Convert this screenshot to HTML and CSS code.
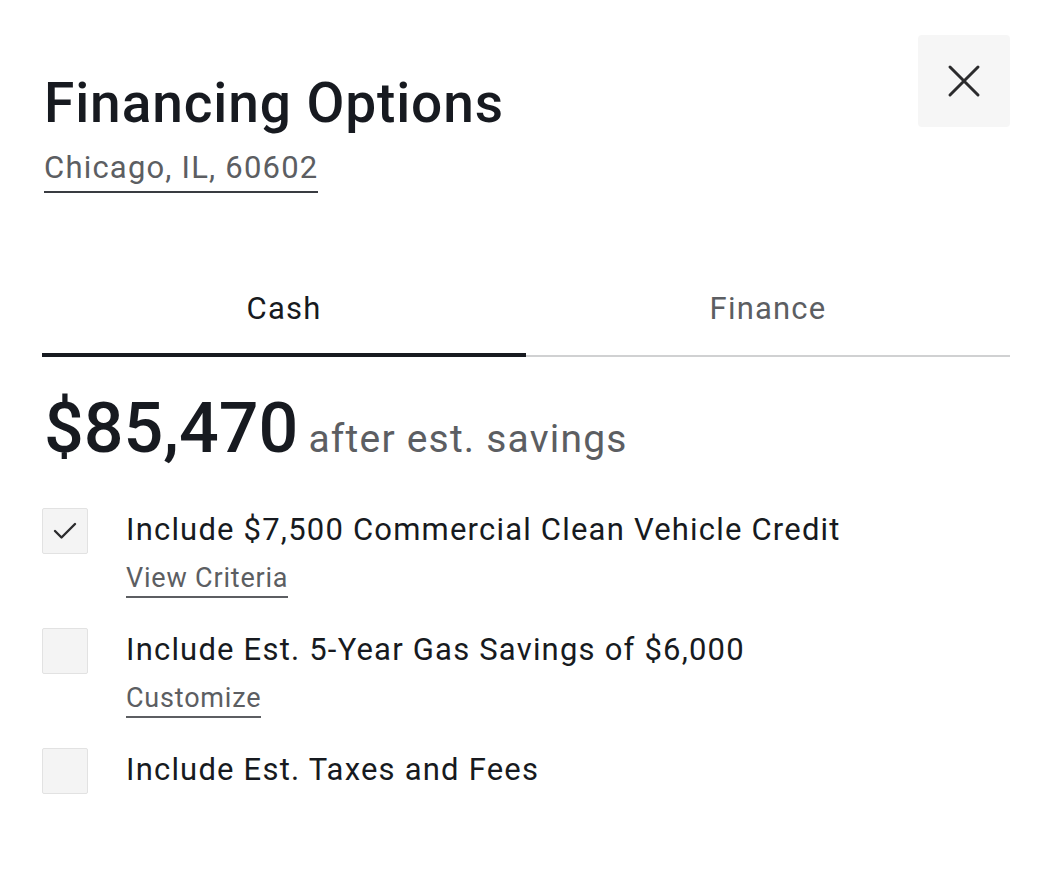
FILE: index.html
```html
<!DOCTYPE html>
<html lang="en">
<head>
  <meta charset="UTF-8" />
  <meta name="viewport" content="width=device-width, initial-scale=1.0"/>
  <title>Financing Options</title>
  <link rel="stylesheet" href="styles.css">
</head>
<body>

  <div class="panel">
    <header class="panel-head">
      <div class="title-block">
        <h1>Financing Options</h1>
        <a href="#" class="location">Chicago, IL, 60602</a>
      </div>
      <button class="close-btn" aria-label="Close">
        <svg width="34" height="34" viewBox="0 0 34 34" fill="none" stroke="#2b2b2d" stroke-width="3" stroke-linecap="round">
          <path d="M3 3 L31 31 M31 3 L3 31"/>
        </svg>
      </button>
    </header>

    <!-- Tabs -->
    <nav class="tabs">
      <button class="tab active">Cash</button>
      <button class="tab">Finance</button>
    </nav>

    <div class="price">
      <span class="amount">$85,470</span>
      <span class="note">after est. savings</span>
    </div>

    <ul class="options">
      <li class="option">
        <span class="checkbox checked">
          <svg width="24" height="18" viewBox="0 0 24 18" fill="none" stroke="#2b2b2d" stroke-width="2.4" stroke-linecap="round" stroke-linejoin="round">
            <path d="M2 9 L8.5 15.5 L22 2"/>
          </svg>
        </span>
        <div class="option-text">
          <span class="label">Include $7,500 Commercial Clean Vehicle Credit</span>
          <a href="#" class="sub-link">View Criteria</a>
        </div>
      </li>
      <li class="option">
        <span class="checkbox"></span>
        <div class="option-text">
          <span class="label">Include Est. 5-Year Gas Savings of $6,000</span>
          <a href="#" class="sub-link">Customize</a>
        </div>
      </li>
      <li class="option">
        <span class="checkbox"></span>
        <div class="option-text">
          <span class="label">Include Est. Taxes and Fees</span>
        </div>
      </li>
    </ul>
  </div>

</body>
</html>
```

FILE: styles.css
```css
body {
  font-family: Roboto, 'Liberation Sans', sans-serif;
  margin: 0;
  background: #fff;
  color: #171a20;
}

.panel {
  padding: 35px 28px 40px 42px;
}

.panel-head {
  display: flex;
  justify-content: space-between;
  align-items: flex-start;
}

.title-block {
  padding-top: 36px;
  padding-left: 2px;
}

h1 {
  margin: 0;
  font-size: 55px;
  font-weight: 500;
  line-height: 64px;
  letter-spacing: 0.9px;
}

.location {
  display: inline-block;
  margin-top: 10px;
  font-size: 31px;
  line-height: 46px;
  color: #5c5e62;
  text-decoration: none;
  border-bottom: 2px solid #393c41;
  letter-spacing: 1.2px;
}

.close-btn {
  width: 92px;
  height: 92px;
  border: none;
  background: #f6f6f6;
  border-radius: 4px;
  display: flex;
  align-items: center;
  justify-content: center;
  cursor: pointer;
  padding: 0;
}

.tabs {
  display: flex;
  margin-top: 97px;
  border-bottom: 2px solid #d0d1d2;
}

.tab {
  flex: 1;
  background: none;
  border: none;
  font-family: inherit;
  font-size: 31px;
  color: #5c5e62;
  padding: 0 0 26px;
  margin-bottom: -2px;
  border-bottom: 4px solid transparent;
  letter-spacing: 1.2px;
  cursor: pointer;
}

.tab.active {
  color: #171a20;
  border-bottom-color: #171a20;
}

.price {
  display: flex;
  align-items: baseline;
  gap: 10px;
  margin-top: 31px;
  padding-left: 2px;
}

.amount {
  font-size: 70px;
  font-weight: 500;
  line-height: 80px;
}

.note {
  font-size: 39px;
  color: #5c5e62;
  letter-spacing: 1.2px;
}

.options {
  list-style: none;
  margin: 40px 0 0;
  padding: 0;
}

.option {
  display: flex;
  gap: 38px;
  height: 120px;
}

.checkbox {
  width: 44px;
  height: 44px;
  flex-shrink: 0;
  background: #f4f4f4;
  border: 1px solid #e2e2e2;
  border-radius: 2px;
  display: flex;
  align-items: center;
  justify-content: center;
}

.option-text {
  display: flex;
  flex-direction: column;
  align-items: flex-start;
}

.label {
  font-size: 31px;
  line-height: 44px;
  letter-spacing: 1.2px;
}

.sub-link {
  margin-top: 8px;
  font-size: 27px;
  line-height: 36px;
  color: #5c5e62;
  text-decoration: none;
  border-bottom: 2px solid #5c5e62;
  letter-spacing: 0.8px;
}
```
